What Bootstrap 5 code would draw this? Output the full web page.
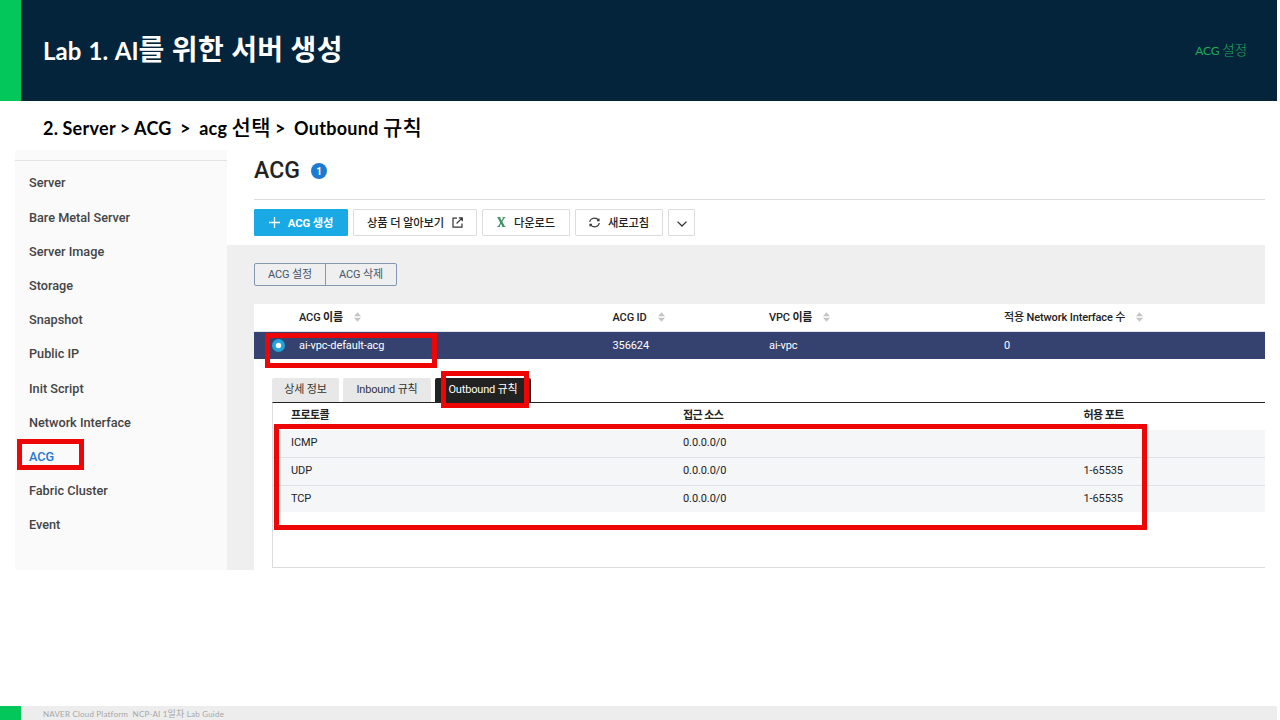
<!DOCTYPE html>
<html lang="ko">
<head>
<meta charset="utf-8">
<title>Lab 1. AI를 위한 서버 생성</title>
<link href="https://cdn.jsdelivr.net/npm/bootstrap@5.3.0/dist/css/bootstrap.min.css" rel="stylesheet">
<style>
body{font-family:Lato,"Noto Sans CJK KR",sans-serif;width:1280px;height:720px;overflow:hidden;background:#fff;color:#000}
.slide{width:1277px;height:720px}
.topbar{height:101px;background:#04243b;border-left:21px solid #03c75a;padding:0 30px 0 22px}
.topbar h1{font-size:24px;font-weight:700;color:#fff;line-height:40px;padding-bottom:2px;word-spacing:1.5px}
.topbar h1 .ko{font-size:28px;font-weight:700;letter-spacing:.35px;word-spacing:0}
.topic{font-size:12px;color:#1fa95c;font-weight:400;padding-bottom:1px;letter-spacing:-.1px}
.topic .ko{font-size:13.5px;font-weight:300}
.crumb{height:49px;padding:11px 0 0 43px;font-size:18px;font-weight:700;line-height:30px;white-space:pre;letter-spacing:.28px;word-spacing:-.45px}
.crumb .ko{font-size:21px;font-weight:500}
.console{height:420px;margin-left:15px;width:1250px;font-family:Roboto,"Noto Sans CJK KR",sans-serif;font-size:11px;color:#222;letter-spacing:-.1px}
.side{width:212px;background:#fafafa;padding-top:10px;letter-spacing:0}
.side ul{border-top:1px solid #e3e3e3;padding:5.4px 14px 0}
.side li{height:34.2px;line-height:34.2px;font-size:12.7px;font-weight:500;color:#444}
.side li.on{color:#1f78d1}
.hl{position:absolute;border:5px solid #ee0505;z-index:3}
.head{height:95px;padding-left:27px}
.head .ttl{height:50px;border-bottom:1px solid #dcdcdc;padding-bottom:7px}
.head h2{font-size:23px;font-weight:500;color:#222;line-height:24px;letter-spacing:.1px}
.num{width:16px;height:16px;border-radius:50%;background:#1c7bd0;color:#fff;font-size:10px;font-weight:700;margin-left:11px}
.tools{padding-top:9px;gap:5px}
.tools .btn{height:27px;border-radius:1px;border:1px solid #dcdcdc;background:#fff;font-size:11.3px;font-weight:500;color:#222;padding:2px 0 0;line-height:1;font-family:inherit;letter-spacing:-.15px;display:flex;align-items:center;justify-content:center;white-space:nowrap}
.tools .btn svg{margin-bottom:3px}
.tools .btn.create{background:#19a9e5;border-color:#19a9e5;color:#fff;font-weight:700}
.grayzone{height:325px;background:#efefef;padding:18px 0 0 27px}
.pair{height:23px;width:143px;border:1px solid #8496b0;border-radius:2px;color:#44546a;font-size:11px;line-height:21px}
.pair div+div{border-left:1px solid #8496b0}
.sheet{margin-top:18px;height:266px;background:#fff}
.cols{display:grid;grid-template-columns:45px 313.5px 156.5px 235px 1fr;align-items:center}
.cols.names{height:27px;font-weight:500;padding-top:1px;letter-spacing:-.13px}
.cols.names .ko{font-weight:700;letter-spacing:-.3px}
.cols.picked{height:28px;background:#35426f;color:#fff;border-top:1px solid #dfe3ee;font-size:11px;padding-top:1px}
.sort{margin-left:11px;margin-top:-1px}
.detail{margin:19px 0 0 18px}
.tabs{height:24px;gap:4px}
.tabs .tabx{background:#e8e8e8;border-radius:2px 2px 0 0;display:flex;align-items:center;justify-content:center;white-space:nowrap;color:#333;letter-spacing:-.18px}
.tabs .tabx.on{background:#222;color:#fff}
.rules{height:166px;border-top:1px solid #222;border-left:1px solid #dcdcdc;border-bottom:1px solid #dcdcdc}
.rule{display:grid;grid-template-columns:392px 400.5px 1fr;padding-left:18px;height:28px;align-items:center;background:#f5f6f8;border-bottom:1px solid #dfe0e3;padding-bottom:1px}
.rule.top{background:#fff;border:0;height:27px;font-weight:700;padding-bottom:0;letter-spacing:-.6px}
.rule.last{border:0;height:26px;padding-bottom:0}
.foot{margin-top:136px;height:14px;background:#ededed;border-left:21px solid #03c75a;padding-left:22px;font-size:8px;line-height:15px;color:#a6a6a6;white-space:pre;letter-spacing:.2px}
.foot .ko{font-size:9px}
</style>
</head>
<body>
<div class="slide">
<header class="topbar d-flex align-items-center justify-content-between">
<h1 class="m-0">Lab 1. AI<span class="ko">를 위한 서버 생성</span></h1>
<div class="topic">ACG <span class="ko">설정</span></div>
</header>
<div class="crumb">2. Server &gt; ACG  &gt;  acg <span class="ko">선택</span> &gt;  Outbound <span class="ko">규칙</span></div>
<div class="console d-flex">
<nav class="side flex-shrink-0">
<ul class="list-unstyled m-0">
<li>Server</li><li>Bare Metal Server</li><li>Server Image</li><li>Storage</li><li>Snapshot</li><li>Public IP</li><li>Init Script</li><li>Network Interface</li>
<li class="on position-relative">ACG<span class="hl" style="left:-12px;top:-1px;width:67px;height:31px"></span></li>
<li>Fabric Cluster</li><li>Event</li>
</ul>
</nav>
<main class="flex-grow-1">
<section class="head">
<div class="ttl d-flex align-items-center"><h2 class="m-0">ACG</h2><span class="num d-flex align-items-center justify-content-center">1</span></div>
<div class="tools d-flex">
<button class="btn create" style="width:94px"><svg width="11" height="11" viewBox="0 0 11 11" stroke="#fff" stroke-width="1.3" class="me-2"><path d="M5.5 0v11M0 5.5h11"/></svg>ACG 생성</button>
<button class="btn" style="width:124px">상품 더 알아보기<svg class="ms-2" width="11" height="11" viewBox="0 0 11 11" fill="none" stroke="#333" stroke-width="1.2"><path d="M5 1.2H1v9h9V6.5M6.8.8h3.5v3.5M10.2.9 4.6 6.5"/></svg></button>
<button class="btn" style="width:88px"><svg class="me-2" width="9" height="10" viewBox="0 0 9 10" fill="none" stroke="#3f9163"><path d="M1.7.5l5 9" stroke-width="2.2"/><path d="M7 .5l-5.2 9" stroke-width="1.3"/><path d="M.3.6h3M5.7.6h2.6M.3 9.4h2.6M5.4 9.4h3" stroke-width="1"/></svg>다운로드</button>
<button class="btn" style="width:88px"><svg class="me-2" width="11" height="11" viewBox="0 0 11 11" fill="none" stroke="#333" stroke-width="1.1"><path d="M.7 5A4.8 4.4 0 0 1 9.5 3.2M10.3 6A4.8 4.4 0 0 1 1.5 7.8M10 1.5v2.3H8M1 9.5V7.2H3"/></svg>새로고침</button>
<button class="btn" style="width:27px"><svg class="mb-0" width="10" height="6" viewBox="0 0 10 6" fill="none" stroke="#333" stroke-width="1.3"><path d="M.5.6 5 5 9.5.6"/></svg></button>
</div>
</section>
<section class="grayzone">
<div class="pair d-flex text-center"><div class="flex-fill">ACG 설정</div><div class="flex-fill">ACG 삭제</div></div>
<div class="sheet">
<div class="cols names"><span></span>
<span>ACG <span class="ko">이름</span><svg class="sort" width="7" height="10" viewBox="0 0 7 10" fill="#c4c4c4"><path d="M0 4.3 3.5.2 7 4.3zM0 5.7h7L3.5 9.8z"/></svg></span>
<span>ACG ID<svg class="sort" width="7" height="10" viewBox="0 0 7 10" fill="#c4c4c4"><path d="M0 4.3 3.5.2 7 4.3zM0 5.7h7L3.5 9.8z"/></svg></span>
<span>VPC <span class="ko">이름</span><svg class="sort" width="7" height="10" viewBox="0 0 7 10" fill="#c4c4c4"><path d="M0 4.3 3.5.2 7 4.3zM0 5.7h7L3.5 9.8z"/></svg></span>
<span>적용 Network Interface 수<svg class="sort" width="7" height="10" viewBox="0 0 7 10" fill="#c4c4c4"><path d="M0 4.3 3.5.2 7 4.3zM0 5.7h7L3.5 9.8z"/></svg></span></div>
<div class="cols picked position-relative"><svg width="13" height="13" viewBox="0 0 13 13" style="margin:-1px 0 0 18px"><circle cx="6.5" cy="6.5" r="6.5" fill="#22a3dc"/><circle cx="6.5" cy="6.5" r="2.7" fill="#fff"/></svg><span>ai-vpc-default-acg</span><span>356624</span><span>ai-vpc</span><span>0</span><span class="hl" style="left:11px;top:1px;width:172px;height:35px"></span></div>
<div class="detail">
<div class="tabs d-flex"><div class="tabx" style="width:67px">상세 정보</div><div class="tabx" style="width:88px">Inbound 규칙</div><div class="tabx on position-relative" style="width:96px">Outbound 규칙<span class="hl" style="left:6px;top:-7px;width:88px;height:37px"></span></div></div>
<div class="rules position-relative">
<div class="rule top"><span>프로토콜</span><span>접근 소스</span><span>허용 포트</span></div>
<div class="rule"><span>ICMP</span><span>0.0.0.0/0</span><span></span></div>
<div class="rule"><span>UDP</span><span>0.0.0.0/0</span><span>1-65535</span></div>
<div class="rule last"><span>TCP</span><span>0.0.0.0/0</span><span>1-65535</span></div>
<span class="hl" style="left:1px;top:21px;width:873px;height:106px"></span>
</div>
</div>
</div>
</section>
</main>
</div>
<footer class="foot">NAVER Cloud Platform  NCP-AI 1<span class="ko">일차</span> Lab Guide</footer>
</div>
<script src="https://cdn.jsdelivr.net/npm/bootstrap@5.3.0/dist/js/bootstrap.bundle.min.js"></script>
</body>
</html>
